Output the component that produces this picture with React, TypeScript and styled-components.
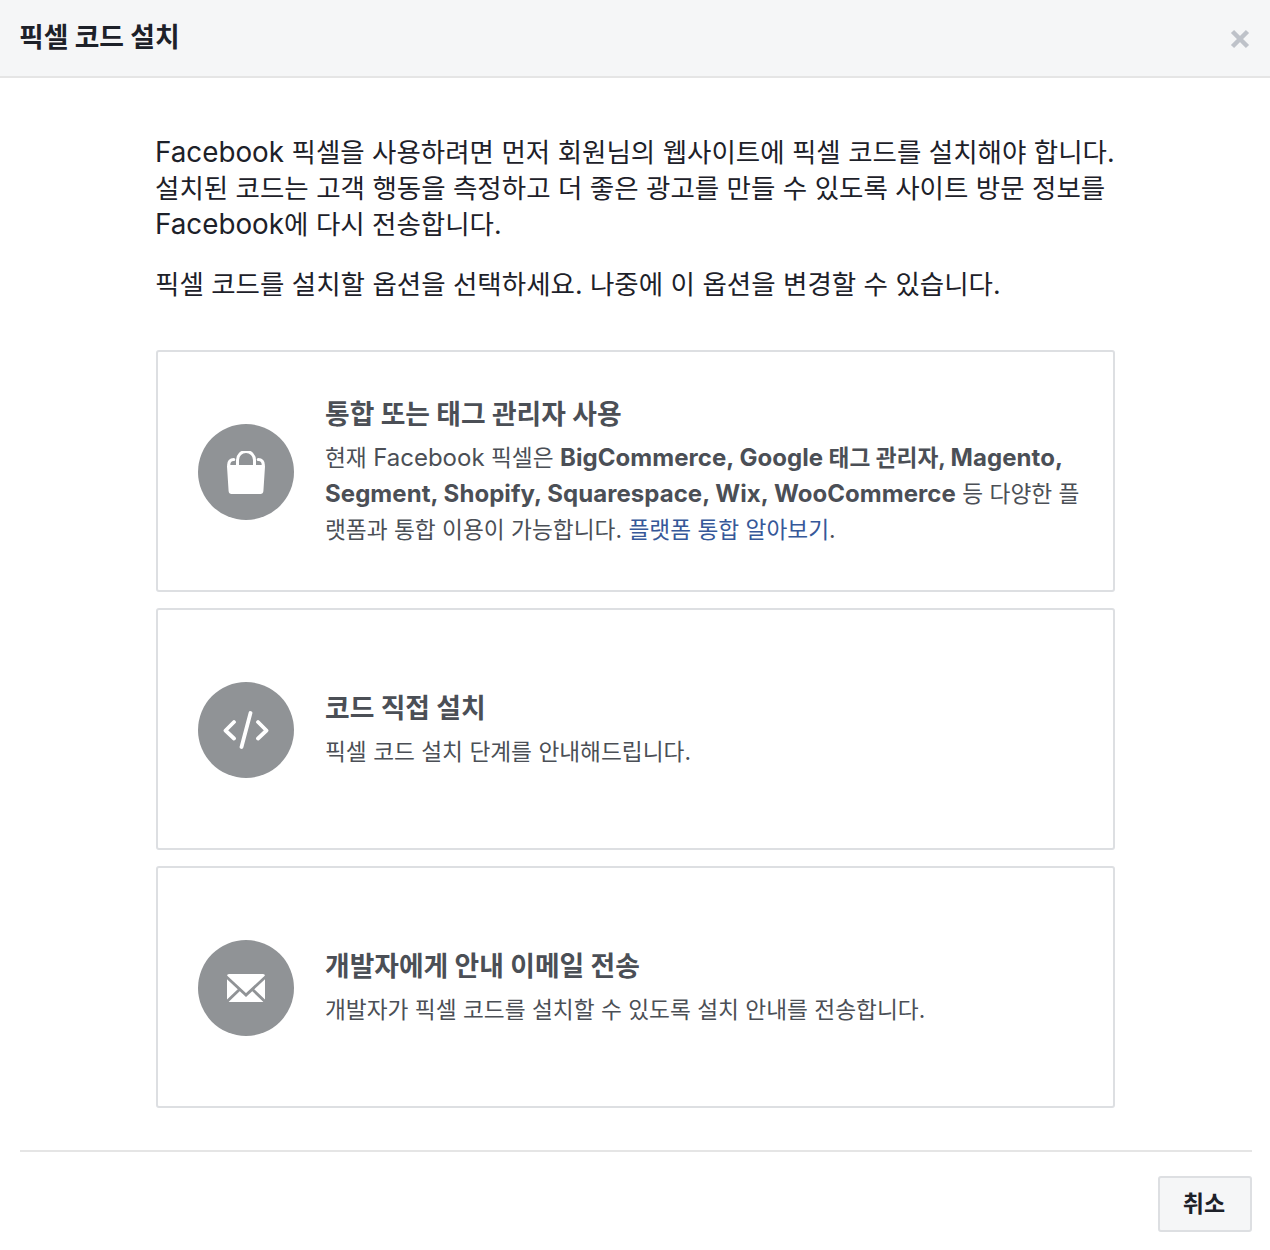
import React from "react";
import styled, { createGlobalStyle } from "styled-components";

const Global = createGlobalStyle`
  html, body { margin: 0; padding: 0; background: #fff; }
  body { font-family: "Inter", "Liberation Sans", "Noto Sans CJK KR", sans-serif; }
`;
const Page = styled.div`
  width: 1270px;
  height: 1250px;
  display: flex;
  flex-direction: column;
  overflow: hidden;
`;
const Header = styled.header`
  box-sizing: border-box;
  height: 78px;
  background: #f5f6f7;
  border-bottom: 2px solid #e5e5e5;
  display: flex;
  align-items: center;
  justify-content: space-between;
  padding: 0 20px 2px 19px;
  flex: none;
`;
const Title = styled.h1`
  margin: 0;
  font-size: 26.8px;
  line-height: 32px;
  font-weight: 700;
  color: #1d2129;
`;
const CloseIcon = styled.svg`
  width: 20px;
  height: 20px;
  margin-top: 4px;
  display: block;
`;
const Body = styled.main`
  padding: 56px 155px 0 155px;
  flex: none;
`;
const Intro = styled.p`
  margin: 0 0 24px;
  font-size: 26.5px;
  line-height: 36px;
  color: #1d2129;
  white-space: nowrap;
`;
const Latin = styled.span<{ $size: number; $spread?: boolean }>`
  font-size: ${(p) => p.$size}px;
  letter-spacing: ${(p) => (p.$spread ? "0.06px" : "normal")};
`;
const Options = styled.div`
  margin-top: 48px;
  display: flex;
  flex-direction: column;
  gap: 16px;
  width: 960px;
`;
const Card = styled.section`
  box-sizing: border-box;
  height: 242px;
  border: 2px solid #dddfe2;
  border-radius: 3px;
  margin-left: 1px;
  width: 959px;
  padding: 2px 24px 0 40px;
  display: flex;
  align-items: center;
  gap: 31px;
`;
const Circle = styled.div`
  width: 96px;
  height: 96px;
  flex: none;
  border-radius: 50%;
  background: #909396;
  display: flex;
  align-items: center;
  justify-content: center;
`;
const CardText = styled.div`
  flex: 1;
  min-width: 0;
`;
const CardTitle = styled.h2`
  margin: 0 0 8px;
  font-size: 26.8px;
  line-height: 36px;
  font-weight: 700;
  color: #4b4f56;
`;
const CardDesc = styled.p`
  margin: 0;
  font-size: 22.7px;
  line-height: 36px;
  color: #4b4f56;
  white-space: nowrap;
`;
const Link = styled.a`
  color: #365899;
  text-decoration: none;
`;
const Footer = styled.footer`
  margin: 42px 18px 0 20px;
  border-top: 2px solid #e5e5e5;
  padding-top: 24px;
  display: flex;
  justify-content: flex-end;
`;
const CancelButton = styled.button`
  box-sizing: border-box;
  width: 94px;
  height: 56px;
  background: #f5f6f7;
  border: 2px solid #dddfe2;
  border-radius: 3px;
  font-family: inherit;
  font-size: 23px;
  font-weight: 700;
  color: #1d2129;
  padding: 0 2px 4px 0;
`;

const BagIcon = () => (
  <svg width="38" height="43" viewBox="0 0 38 43" aria-hidden="true">
    <path d="M0 15.500c0-1 .7-1.500 1.700-1.500h34.600c1 0 1.700.5 1.700 1.500l-1.600 24.500c-.1 1.800-1.200 3-3 3H4.600c-1.800 0-2.900-1.200-3-3z" fill="#fff" />
    <path d="M1.700 14c0-3 1.800-5.500 5-5.500M36.300 14c0-3-1.800-5.500-5-5.500" stroke="#fff" strokeWidth="3.200" fill="none" strokeLinecap="round" />
    <path d="M10.500 14V9a8.500 8.500 0 0 1 17 0v5" stroke="#fff" strokeWidth="3" fill="none" />
    <path d="M14 14c.4-4 2.400-6 5-6s4.600 2 5 6z" fill="#909396" />
  </svg>
);
const CodeIcon = () => (
  <svg width="46" height="38" viewBox="0 0 46 38" fill="none" stroke="#fff" strokeWidth="3.800" strokeLinecap="round" strokeLinejoin="round" aria-hidden="true">
    <path d="M11 11 2.500 19.500 11 27.500" />
    <path d="M35 11l8.500 8.500L35 27.500" />
    <path d="M27.500 2 18.500 36" />
  </svg>
);
const MailIcon = () => (
  <svg width="38" height="28" viewBox="0 0 38 28" aria-hidden="true">
    <rect width="38" height="28" rx="2" fill="#fff" />
    <path d="M-1 2.500 19 21 39 2.500M-1 28.500 12.500 15.500M39 28.500 25.500 15.500" stroke="#909396" strokeWidth="2.800" fill="none" />
  </svg>
);

export default function App() {
  return (
    <Page>
      <Global />
      <Header>
        <Title>픽셀 코드 설치</Title>
        <CloseIcon viewBox="0 0 20 20" aria-hidden="true">
          <path d="M2.500 2.500 17.500 17.500M17.500 2.500 2.500 17.500" stroke="#bec2c9" strokeWidth="4.500" fill="none" />
        </CloseIcon>
      </Header>
      <Body>
        <Intro>
          <Latin $size={27.8}>Facebook</Latin> 픽셀을 사용하려면 먼저 회원님의 웹사이트에 픽셀 코드를 설치해야 합니다.
          <br />
          설치된 코드는 고객 행동을 측정하고 더 좋은 광고를 만들 수 있도록 사이트 방문 정보를
          <br />
          <Latin $size={27.8}>Facebook</Latin>에 다시 전송합니다.
        </Intro>
        <Intro>픽셀 코드를 설치할 옵션을 선택하세요. 나중에 이 옵션을 변경할 수 있습니다.</Intro>
        <Options>
          <Card>
            <Circle><BagIcon /></Circle>
            <CardText>
              <CardTitle>통합 또는 태그 관리자 사용</CardTitle>
              <CardDesc>
                현재 <Latin $size={24}>Facebook</Latin> 픽셀은{" "}
                <b>
                  <Latin $size={24} $spread>BigCommerce, Google</Latin> 태그 관리자, <Latin $size={24} $spread>Magento,</Latin>
                </b>
                <br />
                <b>
                  <Latin $size={24} $spread>Segment, Shopify, Squarespace, Wix, WooCommerce</Latin>
                </b>{" "}
                등 다양한 플
                <br />
                랫폼과 통합 이용이 가능합니다. <Link href="#">플랫폼 통합 알아보기</Link>.
              </CardDesc>
            </CardText>
          </Card>
          <Card>
            <Circle><CodeIcon /></Circle>
            <CardText>
              <CardTitle>코드 직접 설치</CardTitle>
              <CardDesc>픽셀 코드 설치 단계를 안내해드립니다.</CardDesc>
            </CardText>
          </Card>
          <Card>
            <Circle><MailIcon /></Circle>
            <CardText>
              <CardTitle>개발자에게 안내 이메일 전송</CardTitle>
              <CardDesc>개발자가 픽셀 코드를 설치할 수 있도록 설치 안내를 전송합니다.</CardDesc>
            </CardText>
          </Card>
        </Options>
      </Body>
      <Footer>
        <CancelButton>취소</CancelButton>
      </Footer>
    </Page>
  );
}
